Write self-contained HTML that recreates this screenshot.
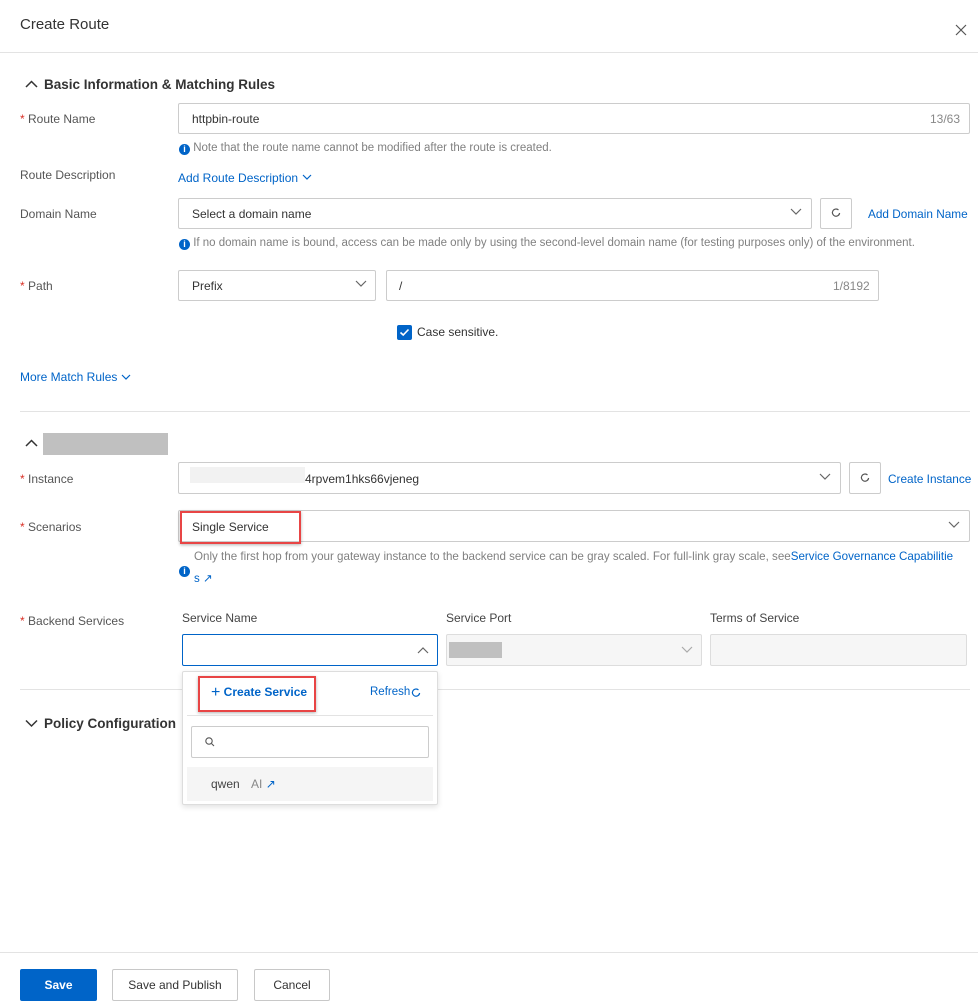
<!DOCTYPE html>
<html><head><meta charset="utf-8"><style>
*{box-sizing:border-box;margin:0;padding:0}
body{width:978px;height:1004px;background:#fff;font-family:"Liberation Sans",sans-serif;font-size:12px;color:#333;position:relative;overflow:hidden}
.a{position:absolute;white-space:nowrap}
.box{position:absolute;border:1px solid #ccc;border-radius:2px;background:#fff}
.lbl{position:absolute;color:#555;font-size:12px;white-space:nowrap}
.req:before{content:"* ";color:#d93026}
.link{color:#0064c8}
.hint{color:#808080;font-size:11.5px}
.line{position:absolute;height:1px;background:#e3e3e3}
.info{display:inline-block;width:11px;height:11px;border-radius:50%;background:#0064c8;color:#fff;font-size:9px;font-weight:bold;text-align:center;line-height:11px;vertical-align:-1px}
.red{position:absolute;border:2px solid #e84545;box-shadow:0 1px 3px rgba(0,0,0,.3)}
.btn{position:absolute;border:1px solid #c8c8c8;border-radius:2px;background:#fff;text-align:center;line-height:30px;font-size:12px;color:#333}
svg{position:absolute}
</style></head><body>
<div class="a" style="left:20px;top:16px;font-size:15px;color:#333">Create Route</div>
<svg style="left:955px;top:24px" width="12" height="12"><path d="M1 1L11 11M11 1L1 11" stroke="#555" stroke-width="1.2"/></svg>
<div class="line" style="left:0;top:52px;width:978px"></div>

<svg style="left:25px;top:80px" width="13" height="9"><path d="M1 7L6.5 1.5L12 7" stroke="#333" stroke-width="1.5" fill="none"/></svg>
<div class="a" style="left:44px;top:77px;font-size:13.5px;font-weight:bold;color:#333">Basic Information &amp; Matching Rules</div>

<div class="lbl req" style="left:20px;top:112px">Route Name</div>
<div class="box" style="left:178px;top:103px;width:792px;height:31px"></div>
<div class="a" style="left:192px;top:112px">httpbin-route</div>
<div class="a" style="left:930px;top:112px;color:#888">13/63</div>
<div class="a hint" style="left:179px;top:142px"><span class="info">i</span> Note that the route name cannot be modified after the route is created.</div>

<div class="lbl" style="left:20px;top:168px">Route Description</div>
<div class="a link" style="left:178px;top:171px">Add Route Description</div>
<svg style="left:302px;top:174px" width="10" height="7"><path d="M1 1L5 5L9 1" stroke="#0064c8" stroke-width="1.2" fill="none"/></svg>

<div class="lbl" style="left:20px;top:207px">Domain Name</div>
<div class="box" style="left:178px;top:198px;width:634px;height:31px"></div>
<div class="a" style="left:192px;top:207px">Select a domain name</div>
<svg style="left:790px;top:208px" width="12" height="8"><path d="M1 1L6 6L11 1" stroke="#666" stroke-width="1.2" fill="none"/></svg>
<div class="box" style="left:820px;top:198px;width:32px;height:31px"></div>
<svg style="left:831px;top:208px" width="10" height="10"><path d="M7.5 2A3.6 3.6 0 1 0 8.6 5" stroke="#555" stroke-width="1.2" fill="none"/></svg>
<div class="a link" style="left:868px;top:207px;font-size:11.8px">Add Domain Name</div>
<div class="a hint" style="left:179px;top:237px"><span class="info">i</span> If no domain name is bound, access can be made only by using the second-level domain name (for testing purposes only) of the environment.</div>

<div class="lbl req" style="left:20px;top:279px">Path</div>
<div class="box" style="left:178px;top:270px;width:198px;height:31px"></div>
<div class="a" style="left:192px;top:279px">Prefix</div>
<svg style="left:355px;top:280px" width="12" height="8"><path d="M1 1L6 6L11 1" stroke="#666" stroke-width="1.2" fill="none"/></svg>
<div class="box" style="left:386px;top:270px;width:493px;height:31px"></div>
<div class="a" style="left:399px;top:279px">/</div>
<div class="a" style="left:833px;top:279px;color:#888">1/8192</div>

<div class="a" style="left:397px;top:325px;width:15px;height:15px;background:#0064c8;border-radius:2px"></div>
<svg style="left:399px;top:328px" width="11" height="9"><path d="M1.5 4.5L4.2 7L9.5 1.5" stroke="#fff" stroke-width="1.6" fill="none"/></svg>
<div class="a" style="left:417px;top:325px">Case sensitive.</div>

<div class="a link" style="left:20px;top:370px">More Match Rules</div>
<svg style="left:121px;top:374px" width="10" height="7"><path d="M1 1L5 5L9 1" stroke="#0064c8" stroke-width="1.2" fill="none"/></svg>
<div class="line" style="left:20px;top:411px;width:950px"></div>

<svg style="left:25px;top:439px" width="13" height="9"><path d="M1 7L6.5 1.5L12 7" stroke="#333" stroke-width="1.5" fill="none"/></svg>
<div class="a" style="left:43px;top:433px;width:125px;height:22px;background:#c0c0c0"></div>

<div class="lbl req" style="left:20px;top:472px">Instance</div>
<div class="box" style="left:178px;top:462px;width:663px;height:32px"></div>
<div class="a" style="left:190px;top:467px;width:115px;height:16px;background:#f2f2f2"></div>
<div class="a" style="left:305px;top:472px">4rpvem1hks66vjeneg</div>
<svg style="left:819px;top:473px" width="12" height="8"><path d="M1 1L6 6L11 1" stroke="#666" stroke-width="1.2" fill="none"/></svg>
<div class="box" style="left:849px;top:462px;width:32px;height:32px"></div>
<svg style="left:860px;top:473px" width="10" height="10"><path d="M7.5 2A3.6 3.6 0 1 0 8.6 5" stroke="#555" stroke-width="1.2" fill="none"/></svg>
<div class="a link" style="left:888px;top:472px;font-size:11.8px">Create Instance</div>

<div class="lbl req" style="left:20px;top:520px">Scenarios</div>
<div class="box" style="left:178px;top:510px;width:792px;height:32px"></div>
<div class="a" style="left:192px;top:520px;color:#333">Single Service</div>
<div class="red" style="left:180px;top:511px;width:121px;height:33px"></div>
<svg style="left:948px;top:521px" width="12" height="8"><path d="M1 1L6 6L11 1" stroke="#666" stroke-width="1.2" fill="none"/></svg>
<div class="a" style="left:179px;top:562px"><span class="info">i</span></div>
<div class="a hint" style="left:194px;top:550px;font-size:11.6px">Only the first hop from your gateway instance to the backend service can be gray scaled. For full-link gray scale, see<span class="link">Service Governance Capabilitie</span></div>
<div class="a link" style="left:194px;top:571px;font-size:11.5px">s &#x2197;</div>

<div class="lbl req" style="left:20px;top:614px">Backend Services</div>
<div class="a" style="left:182px;top:611px;color:#444">Service Name</div>
<div class="a" style="left:446px;top:611px;color:#444">Service Port</div>
<div class="a" style="left:710px;top:611px;color:#444">Terms of Service</div>
<div class="box" style="left:182px;top:634px;width:256px;height:32px;border-color:#0064c8"></div>
<svg style="left:417px;top:646px" width="12" height="8"><path d="M1 7L6 2L11 7" stroke="#666" stroke-width="1.2" fill="none"/></svg>
<div class="box" style="left:446px;top:634px;width:256px;height:32px;background:#f6f6f6;border-color:#ddd"></div>
<div class="a" style="left:449px;top:642px;width:53px;height:16px;background:#c0c0c0"></div>
<svg style="left:681px;top:646px" width="12" height="8"><path d="M1 1L6 6L11 1" stroke="#aaa" stroke-width="1.2" fill="none"/></svg>
<div class="box" style="left:710px;top:634px;width:257px;height:32px;background:#f6f6f6;border-color:#ddd"></div>

<div class="line" style="left:20px;top:689px;width:950px"></div>
<svg style="left:25px;top:719px" width="13" height="9"><path d="M1 1.5L6.5 7L12 1.5" stroke="#333" stroke-width="1.5" fill="none"/></svg>
<div class="a" style="left:44px;top:716px;font-size:13.5px;font-weight:bold;color:#333">Policy Configuration</div>

<div class="box" style="left:182px;top:671px;width:256px;height:134px;border-color:#ddd;box-shadow:0 2px 6px rgba(0,0,0,.12)"></div>
<div class="a link" style="left:211px;top:684px;font-weight:bold"><span style="font-size:16px;font-weight:normal;vertical-align:-1px">+</span> Create Service</div>
<div class="red" style="left:198px;top:676px;width:118px;height:36px"></div>
<div class="a link" style="left:370px;top:686px;font-size:11.5px">Refresh</div>
<svg style="left:411px;top:688px" width="10" height="10"><path d="M7.5 2A3.6 3.6 0 1 0 8.6 5" stroke="#0064c8" stroke-width="1.2" fill="none"/></svg>
<div class="line" style="left:187px;top:715px;width:246px"></div>
<div class="box" style="left:191px;top:726px;width:238px;height:32px"></div>
<svg style="left:205px;top:737px" width="10" height="10"><circle cx="4" cy="4" r="3.2" stroke="#555" stroke-width="1.1" fill="none"/><path d="M6.5 6.5L9 9" stroke="#555" stroke-width="1.1"/></svg>
<div class="a" style="left:187px;top:767px;width:246px;height:34px;background:#f5f5f5"></div>
<div class="a" style="left:211px;top:777px;color:#444">qwen <span style="color:#888;margin-left:8px">AI</span> <span class="link">&#x2197;</span></div>

<div class="line" style="left:0;top:952px;width:978px"></div>
<div class="btn" style="left:20px;top:969px;width:77px;height:32px;background:#0064c8;border-color:#0064c8;color:#fff;font-weight:bold;line-height:31px">Save</div>
<div class="btn" style="left:112px;top:969px;width:126px;height:32px;line-height:31px">Save and Publish</div>
<div class="btn" style="left:254px;top:969px;width:76px;height:32px;line-height:31px">Cancel</div>
</body></html>
